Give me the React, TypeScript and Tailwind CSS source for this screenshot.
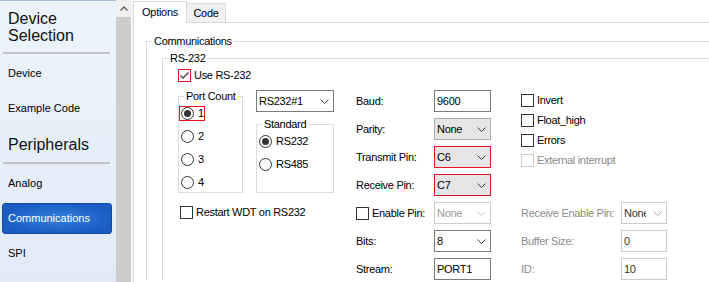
import React from 'react';

const Chev = ({ c = '#404040' }: { c?: string }) => (
  <svg width="9" height="5" viewBox="0 0 9 5" className="shrink-0">
    <path d="M0.5 0.5L4.5 4.5L8.5 0.5" fill="none" stroke={c} strokeWidth="1" />
  </svg>
);

type SelProps = { v: string; box: string; txt?: string; chev?: string; tw?: string };
const Sel = ({ v, box, txt = 'text-black', chev, tw = 'flex-1' }: SelProps) => (
  <div className={`flex h-[22px] items-center justify-between border pl-[2px] pr-[4px] ${box}`}>
    <span className={`overflow-hidden whitespace-nowrap ${tw} ${txt}`}>{v}</span>
    <Chev c={chev} />
  </div>
);

const Inp = ({ v, box, txt = 'text-black' }: { v: string; box: string; txt?: string }) => (
  <div className={`flex h-[22px] items-center border bg-white pl-[2px] ${box} ${txt}`}>{v}</div>
);

const Box = ({ checked, red, disabled }: { checked?: boolean; red?: boolean; disabled?: boolean }) => (
  <span
    className={`flex h-[13px] w-[13px] shrink-0 items-center justify-center border bg-white ${
      red ? 'border-[#e81123]' : disabled ? 'border-[#cccccc]' : 'border-[#333333]'
    }`}
  >
    {checked && (
      <svg width="11" height="11" viewBox="0 0 11 11">
        <path d="M1.5 5.5L4 8L9.5 2.5" fill="none" stroke="#404040" strokeWidth="1.3" />
      </svg>
    )}
  </span>
);

const Check = ({
  label,
  checked,
  red,
  disabled,
  cls = '',
}: {
  label: string;
  checked?: boolean;
  red?: boolean;
  disabled?: boolean;
  cls?: string;
}) => (
  <div className={`flex h-[13px] items-center gap-[3px] ${cls}`}>
    <Box checked={checked} red={red} disabled={disabled} />
    <span className={disabled ? 'text-[#8a8a8a]' : 'text-black'}>{label}</span>
  </div>
);

const Radio = ({ label, checked, red }: { label: string; checked?: boolean; red?: boolean }) => (
  <div
    className={`flex h-[15px] w-fit items-center gap-[4px] border pl-[1px] ${
      red ? 'border-[#e81123]' : 'border-transparent'
    }`}
  >
    <span className="flex h-[13px] w-[13px] shrink-0 items-center justify-center rounded-full border border-[#333333] bg-white">
      {checked && <span className="h-[7px] w-[7px] rounded-full bg-[#333333]" />}
    </span>
    <span>{label}</span>
  </div>
);

const SideItem = ({ label, active }: { label: string; active?: boolean }) => (
  <div
    className={`ml-[2px] flex h-[31px] w-[110px] items-center rounded-[3px] border pl-[5px] text-[11px] ${
      active
        ? 'border-[#0e4aa8] bg-[radial-gradient(ellipse_at_center,#3580e0_0%,#1a5cc2_75%)] text-white'
        : 'border-transparent text-black'
    }`}
  >
    {label}
  </div>
);

export default function App() {
  return (
    <div className="flex h-[282px] w-[709px] overflow-hidden bg-white font-['Liberation_Sans',Arial,sans-serif] text-[11px] text-black">
      {/* Sidebar */}
      <aside className="flex w-[116px] shrink-0 flex-col border-t border-[#a8bbd4] bg-gradient-to-b from-[#ecf3fb] to-[#e1ebf7]">
        <div className="pl-[8px] pt-[9px] text-[16px] leading-[17px] text-[#111]">
          Device
          <br />
          Selection
        </div>
        <div className="ml-[3px] mt-[8px] h-[2px] w-[107px] bg-[#c3c3c3]" />
        <div className="mt-[4px] flex flex-col gap-[4px]">
          <SideItem label="Device" />
          <SideItem label="Example Code" />
        </div>
        <div className="mt-[12px] pl-[8px] text-[16px] leading-[17px] text-[#111]">Peripherals</div>
        <div className="ml-[3px] mt-[9px] h-[2px] w-[107px] bg-[#c3c3c3]" />
        <div className="mt-[4px] flex flex-col gap-[4px]">
          <SideItem label="Analog" />
          <SideItem label="Communications" active />
          <SideItem label="SPI" />
        </div>
      </aside>

      {/* Scrollbar */}
      <div className="flex w-[15px] shrink-0 flex-col">
        <div className="flex h-[17px] items-center justify-center bg-[#f0f0f0]">
          <svg width="8" height="5" viewBox="0 0 8 5">
            <path d="M0.5 4.5L4 1L7.5 4.5" fill="none" stroke="#606060" strokeWidth="1.4" />
          </svg>
        </div>
        <div className="flex-1 bg-[#cdcdcd]" />
      </div>
      <div className="w-[2px] shrink-0 bg-[#f7f7f7]" />

      {/* Main */}
      <main className="flex min-w-0 flex-1 flex-col tracking-[-0.3px]">
        <div className="flex h-[23px] shrink-0 items-end border-b border-[#d9d9d9]">
          <div className="-mb-px flex h-[22px] w-[54px] items-center justify-center border border-b-0 border-[#d9d9d9] bg-white">
            Options
          </div>
          <div className="flex h-[19px] w-[39px] items-center justify-center border border-b-0 border-l-0 border-[#d9d9d9] bg-[#f0f0f0]">
            Code
          </div>
        </div>

        <div className="flex-1 border-l border-[#d9d9d9] pl-[12px] pt-[12px]">
          <fieldset className="border-l border-t border-[#dcdcdc]">
            <legend className="ml-[5px] px-[2px] leading-[13px]">Communications</legend>
            <div className="pl-[15px] pt-[4px]">
              <fieldset className="border-l border-t border-[#dcdcdc]">
                <legend className="ml-[5px] px-[2px] leading-[13px]">RS-232</legend>
                <div className="pl-[15px] pt-[4px]">
                  <Check label="Use RS-232" checked red />

                  <div className="mt-[8px] flex items-start">
                    {/* Left block */}
                    <div className="flex w-[156px] flex-col">
                      <div className="flex gap-[13px]">
                        <fieldset className="h-[103px] w-[65px] border border-[#dcdcdc]">
                          <legend className="ml-[5px] px-[2px] leading-[13px]">Port Count</legend>
                          <div className="flex flex-col gap-[8px] pt-[3px]">
                            <Radio label="1" checked red />
                            <Radio label="2" />
                            <Radio label="3" />
                            <Radio label="4" />
                          </div>
                        </fieldset>
                        <div className="flex w-[78px] flex-col">
                          <Sel v="RS232#1" box="border-[#7a7a7a] bg-white" />
                          <fieldset className="mt-[6px] flex-1 border border-[#dcdcdc]">
                            <legend className="ml-[5px] px-[2px] leading-[13px]">Standard</legend>
                            <div className="flex flex-col gap-[8px] pt-[3px]">
                              <Radio label="RS232" checked />
                              <Radio label="RS485" />
                            </div>
                          </fieldset>
                        </div>
                      </div>
                      <Check label="Restart WDT on RS232" cls="ml-[2px] mt-[13px]" />
                    </div>

                    {/* Right grid */}
                    <div className="ml-[22px] grid grid-cols-[78px_57px_30px_100px_46px] grid-rows-[repeat(7,22px)] items-center gap-y-[6px]">
                      <span>Baud:</span>
                      <Inp v="9600" box="border-[#7a7a7a]" />
                      <span />
                      <div className="col-span-2 row-span-4 flex flex-col gap-[7px] self-start pt-[4px]">
                        <Check label="Invert" />
                        <Check label="Float_high" />
                        <Check label="Errors" />
                        <Check label="External interrupt" disabled />
                      </div>

                      <span>Parity:</span>
                      <Sel v="None" box="border-[#adadad] bg-[#e5e5e5]" />
                      <span />

                      <span>Transmit Pin:</span>
                      <Sel v="C6" box="border-[#e81123] bg-[#e5e5e5]" />
                      <span />

                      <span>Receive Pin:</span>
                      <Sel v="C7" box="border-[#e81123] bg-[#e5e5e5]" />
                      <span />

                      <div className="flex items-center gap-[3px]">
                        <Box />
                        <span>Enable Pin:</span>
                      </div>
                      <Sel v="None" box="border-[#cccccc] bg-white" txt="text-[#9a9a9a]" chev="#c4c4c4" />
                      <span />
                      <span className="text-[#8c8c8c]">Receive Enable Pin:</span>
                      <Sel v="None" box="border-[#cccccc] bg-white" txt="text-[#333333]" chev="#a8a8a8" tw="w-[22px]" />

                      <span>Bits:</span>
                      <Sel v="8" box="border-[#7a7a7a] bg-white" />
                      <span />
                      <span className="text-[#8c8c8c]">Buffer Size:</span>
                      <Inp v="0" box="border-[#cccccc]" txt="text-[#333333]" />

                      <span>Stream:</span>
                      <Inp v="PORT1" box="border-[#7a7a7a]" />
                      <span />
                      <span className="text-[#8c8c8c]">ID:</span>
                      <Inp v="10" box="border-[#cccccc]" txt="text-[#333333]" />
                    </div>
                  </div>
                </div>
              </fieldset>
            </div>
          </fieldset>
        </div>
      </main>
    </div>
  );
}
